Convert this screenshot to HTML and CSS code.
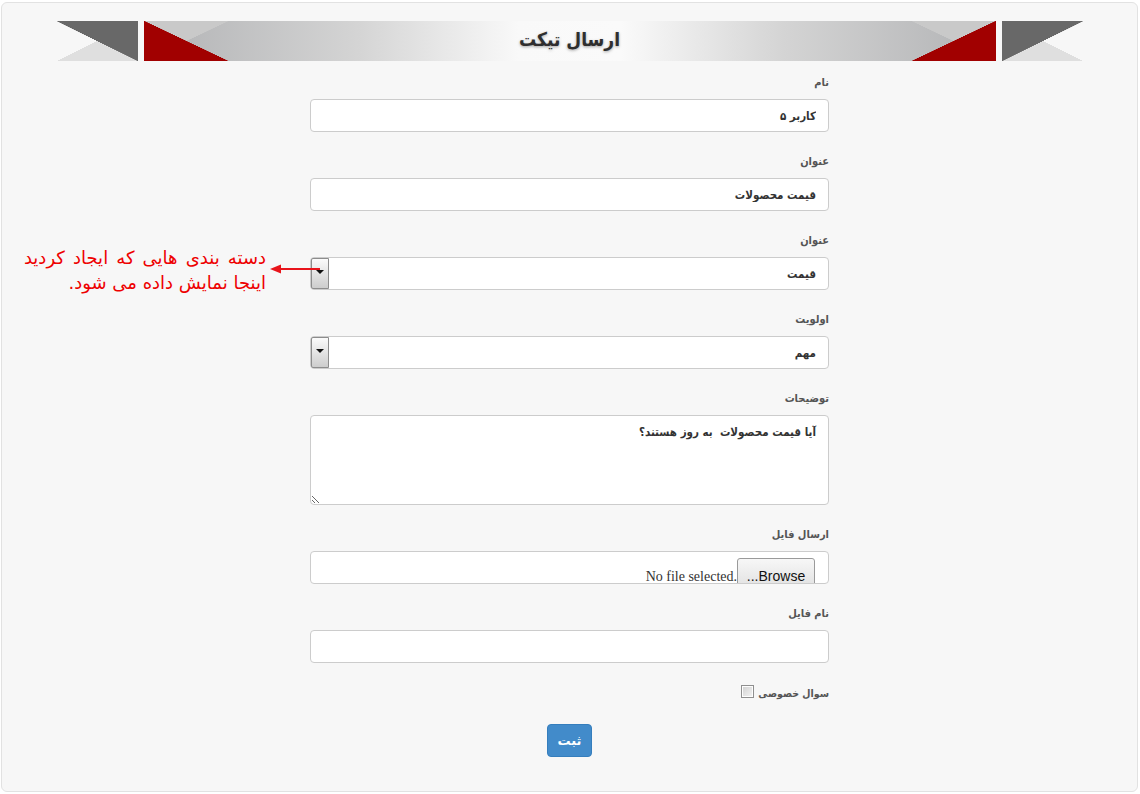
FILE: index.html
```html
<!DOCTYPE html>
<html lang="fa" dir="rtl">
<head>
<meta charset="utf-8">
<title>ارسال تیکت</title>
<link rel="stylesheet" href="styles.css">
</head>
<body>
<div class="panel">
  <div class="banner"><h1 class="banner-title">ارسال تیکت</h1></div>
  <form class="form">
    <div class="group">
      <label class="label">نام</label>
      <input class="control" type="text" value="کاربر ۵">
    </div>
    <div class="group">
      <label class="label">عنوان</label>
      <input class="control" type="text" value="قیمت محصولات">
    </div>
    <div class="group">
      <label class="label">عنوان</label>
      <div class="select">
        <span class="select-text">قیمت</span>
        <span class="select-btn"><span class="caret"></span></span>
        <div class="callout">
          <svg class="callout-arrow" width="50" height="12" viewBox="0 0 50 12">
            <line x1="6" y1="6" x2="50" y2="6" stroke="#e8141b" stroke-width="2"/>
            <polygon points="0,6 11,1.5 11,10.5" fill="#e8141b"/>
          </svg>
          <p class="callout-text"><span class="callout-line1">دسته بندی هایی که ایجاد کردید</span><br>اینجا نمایش داده می شود.</p>
        </div>
      </div>
    </div>
    <div class="group">
      <label class="label">اولویت</label>
      <div class="select">
        <span class="select-text">مهم</span>
        <span class="select-btn"><span class="caret"></span></span>
      </div>
    </div>
    <div class="group">
      <label class="label">توضیحات</label>
      <textarea class="control textarea">آیا قیمت محصولات  به روز هستند؟</textarea>
    </div>
    <div class="group">
      <label class="label">ارسال فایل</label>
      <div class="control file">
        <span class="file-btn" dir="ltr">...Browse</span>
        <span class="file-name" dir="ltr">No file selected.</span>
      </div>
    </div>
    <div class="group">
      <label class="label">نام فایل</label>
      <input class="control" type="text" value="">
    </div>
    <div class="check-row">
      <span class="label check-label">سوال خصوصی</span>
      <span class="checkbox"></span>
    </div>
    <div class="actions">
      <button class="btn" type="button">ثبت</button>
    </div>
  </form>
</div>
</body>
</html>
```
FILE: styles.css
```css
html, body {
  margin: 0;
  padding: 0;
  background: #ffffff;
}
body {
  font-family: "DejaVu Sans Condensed", "DejaVu Sans", "Noto Sans", sans-serif;
  font-stretch: condensed;
  color: #333;
}
.panel {
  margin: 2px 2px 2px 1px;
  height: 790px;
  box-sizing: border-box;
  border: 1px solid #e2e2e2;
  border-radius: 6px;
  background: #f7f7f7;
  padding-top: 18px;
}
.banner {
  width: 1026px;
  height: 40px;
  margin: 0 auto;
  display: flex;
  align-items: center;
  justify-content: center;
  background:
    linear-gradient(to top right, #a10000 50%, transparent 50.6%) 87px 0 / 84px 40px no-repeat,
    linear-gradient(to bottom right, #c9c9c9 50%, transparent 50.6%) 87px 0 / 84px 40px no-repeat,
    linear-gradient(to top left, #a10000 50%, transparent 50.6%) 855px 0 / 84px 40px no-repeat,
    linear-gradient(to bottom left, #c9c9c9 50%, transparent 50.6%) 855px 0 / 84px 40px no-repeat,
    linear-gradient(to top right, transparent 49.4%, #686868 50%) 0 0 / 81px 40px no-repeat,
    linear-gradient(to top left, transparent 49.4%, #686868 50%) 945px 0 / 81px 40px no-repeat,
    linear-gradient(to bottom right, transparent 49.4%, #dfdfdf 50%) 0 20px / 40px 20px no-repeat,
    linear-gradient(#dfdfdf, #dfdfdf) 40px 20px / 41px 20px no-repeat,
    linear-gradient(to bottom left, transparent 49.4%, #dfdfdf 50%) 986px 20px / 40px 20px no-repeat,
    linear-gradient(#dfdfdf, #dfdfdf) 945px 20px / 41px 20px no-repeat,
    linear-gradient(to right, #b1b2b4 0%, #d4d4d4 25%, #f9f9f9 44%, #fafafa 56%, #d4d4d4 75%, #b1b2b4 100%) 87px 0 / 852px 40px no-repeat;
}
.banner-title {
  margin: 0 0 4px 0;
  font-size: 19px;
  font-weight: bold;
  color: #2e2e2e;
  text-shadow: 0 1px 3px rgba(0, 0, 0, 0.35);
  line-height: 36px;
}
.form {
  width: 519px;
  margin: 14px auto 0;
}
.group {
  margin-bottom: 22px;
  display: flex;
  flex-direction: column;
}
.label {
  display: block;
  font-size: 11px;
  font-weight: bold;
  color: #555;
  line-height: 16px;
  margin-bottom: 8px;
}
.control {
  box-sizing: border-box;
  width: 519px;
  height: 33px;
  margin: 0;
  border: 1px solid #cccccc;
  border-radius: 4px;
  background: #ffffff;
  padding: 0 12px;
  font-family: "DejaVu Sans Condensed", "DejaVu Sans", sans-serif;
  font-stretch: condensed;
  font-size: 11.5px;
  font-weight: bold;
  color: #333;
  direction: rtl;
  outline: none;
}
.textarea {
  height: 90px;
  padding: 8px 12px;
  line-height: 16px;
  resize: both;
}
.select {
  position: relative;
  box-sizing: border-box;
  height: 33px;
  border: 1px solid #cccccc;
  border-radius: 4px;
  background: #ffffff;
  display: flex;
  align-items: stretch;
  padding-right: 12px;
}
.select-text {
  flex: 1;
  display: flex;
  align-items: center;
  font-size: 11.5px;
  font-weight: bold;
  color: #333;
}
.select-btn {
  width: 16px;
  margin: 0;
  border: 1px solid #8d8d8d;
  border-radius: 2px 0 0 2px;
  background: linear-gradient(#fbfbfb, #e4e4e4 50%, #cdcdcd);
  display: flex;
  align-items: center;
  justify-content: center;
  padding-bottom: 3px;
}
.caret {
  width: 0;
  height: 0;
  border-left: 4px solid transparent;
  border-right: 4px solid transparent;
  border-top: 4px solid #111;
}
.callout {
  position: absolute;
  top: -13px;
  right: calc(100% - 9px);
  display: flex;
  align-items: flex-start;
  direction: rtl;
}
.callout-text {
  margin: 0;
  white-space: nowrap;
  font-family: "DejaVu Sans", sans-serif;
  font-stretch: normal;
  font-size: 18px;
  line-height: 25px;
  color: #ee0000;
  text-align: right;
}
.callout-line1 {
  word-spacing: 2.4px;
}
.callout-arrow {
  display: block;
  margin-top: 18px;
  margin-left: 4px;
}
.file {
  display: flex;
  align-items: flex-end;
  overflow: hidden;
  padding: 0 13px 0 0;
}
.file-btn {
  box-sizing: border-box;
  width: 78px;
  height: 30px;
  margin-bottom: -5px;
  border: 1px solid #9a9a9a;
  border-radius: 3px;
  background: linear-gradient(#f7f7f7, #e2e2e2);
  font-family: "Liberation Sans", Arial, sans-serif;
  font-stretch: normal;
  font-size: 14px;
  font-weight: normal;
  color: #111;
  display: flex;
  align-items: center;
  justify-content: center;
  padding-top: 5px;
}
.file-name {
  font-family: "Liberation Serif", serif;
  font-stretch: normal;
  font-size: 14px;
  font-weight: normal;
  color: #333;
  margin-left: 1px;
  margin-bottom: -2px;
}
.check-row {
  display: flex;
  align-items: center;
  margin-top: 0;
  gap: 4px;
}
.check-label {
  margin: 0;
  font-size: 10.5px;
}
.checkbox {
  box-sizing: border-box;
  width: 13px;
  height: 13px;
  border: 1px solid #8f8f8f;
  background: linear-gradient(135deg, #d0d0d0, #f4f4f4);
  box-shadow: inset 0 0 0 1px #fdfdfd;
  margin-top: -4px;
}
.actions {
  display: flex;
  justify-content: center;
  margin-top: 23px;
}
.btn {
  width: 45px;
  height: 33px;
  border: 1px solid #357ebd;
  border-radius: 4px;
  background: #428bca;
  color: #ffffff;
  font-family: "DejaVu Sans", sans-serif;
  font-size: 13px;
  font-weight: bold;
  padding: 0;
}
```
